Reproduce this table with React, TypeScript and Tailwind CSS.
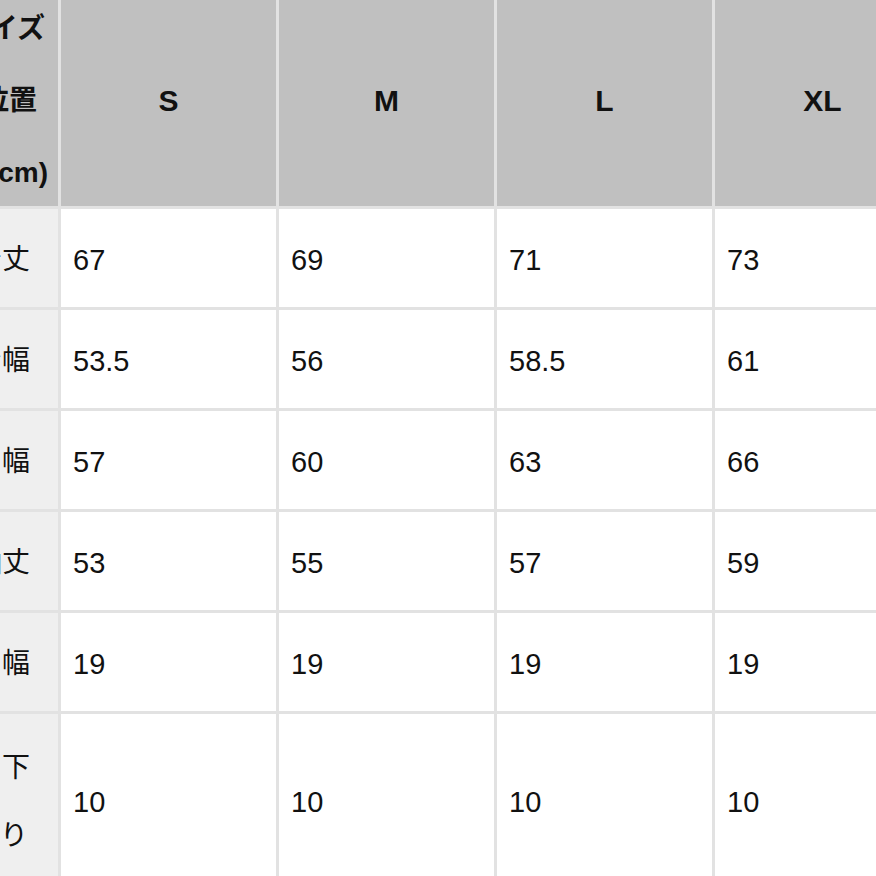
const sizes = ['S', 'M', 'L', 'XL'];

const rows: { label: string[]; values: string[]; tall?: boolean }[] = [
    { label: ['着丈'], values: ['67', '69', '71', '73'] },
    { label: ['身幅'], values: ['53.5', '56', '58.5', '61'] },
    { label: ['すそ幅'], values: ['57', '60', '63', '66'] },
    { label: ['袖丈'], values: ['53', '55', '57', '59'] },
    { label: ['袖口幅'], values: ['19', '19', '19', '19'] },
    { label: ['後ろ下', 'がり'], values: ['10', '10', '10', '10'], tall: true },
];

export default function App() {
    return (
        <div
            className="w-[876px] h-[876px] overflow-hidden bg-white text-[#111]"
            style={{ fontFamily: '"Liberation Sans", "Noto Sans CJK JP", sans-serif' }}
        >
            <div className="ml-[-102px] w-[1032px] grid grid-cols-[160px_215px_215px_215px_215px] grid-rows-[206px_98px_98px_98px_98px_98px_172px] gap-[3px] bg-[#e2e2e2]">
                {/* Header */}
                <div className="bg-[#c0c0c0] overflow-hidden flex flex-col justify-center items-end pb-[4px] text-[28px] font-bold leading-[72px]">
                    <span className="pr-[13px]">サイズ</span>
                    <span className="pr-[21px]">採寸位置</span>
                    <span className="pr-[10px]">(cm)</span>
                </div>
                {sizes.map(s => (
                    <div key={s} className="bg-[#c0c0c0] flex items-center justify-center pb-[6px] text-[30px] font-bold">
                        {s}
                    </div>
                ))}

                {/* Body */}
                {rows.map((row, i) => (
                    <>
                        <div
                            key={`l${i}`}
                            className={`bg-[#efefef] flex flex-col justify-center items-end pt-[4px] pr-[28px] text-[28px] ${row.tall ? 'leading-[68px]' : 'leading-[40px]'}`}
                        >
                            {row.label.map((t, k) => (
                                <span key={t} className={k === 1 ? 'pr-[2px]' : ''}>{t}</span>
                            ))}
                        </div>
                        {row.values.map((v, j) => (
                            <div key={`v${i}-${j}`} className="bg-white flex items-center pt-[5px] pl-[12px] text-[29px]">
                                {v}
                            </div>
                        ))}
                    </>
                ))}
            </div>
        </div>
    );
}
